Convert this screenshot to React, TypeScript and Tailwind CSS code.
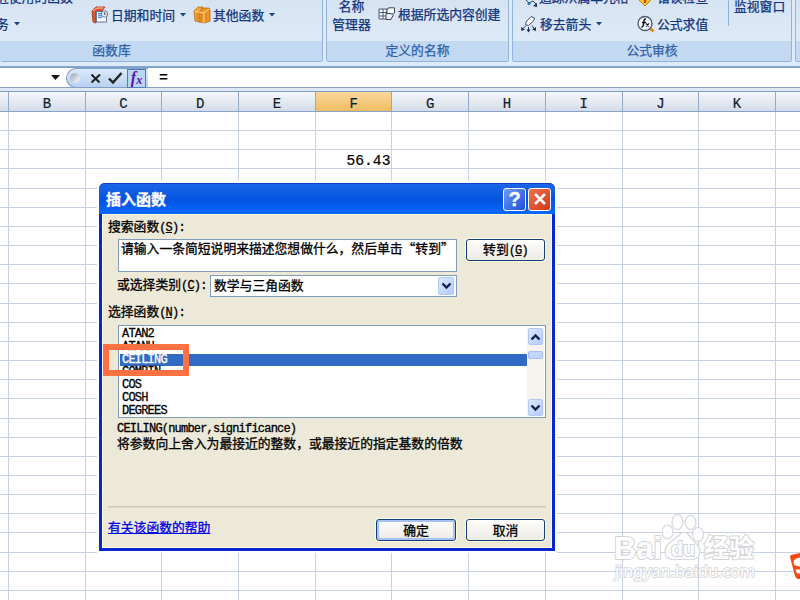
import React from "react";

const columns = ["B", "C", "D", "E", "F", "G", "H", "I", "J", "K", ""];
const rows = Array.from({ length: 26 }, (_, i) => i);
const functions = ["ATAN2", "ATANH", "CEILING", "COMBIN", "COS", "COSH", "DEGREES"];

function Caret({ className = "" }: { className?: string }) {
  return (
    <svg className={className} width="6" height="4" viewBox="0 0 6 4">
      <path d="M0 0h6L3 3.5z" fill="#1c3f86" />
    </svg>
  );
}

function CalendarBook() {
  return (
    <svg width="18" height="18" viewBox="0 0 18 18">
      <path d="M1 5 5 1h9l-3 4H5v12l-3-1z" fill="#e2552c" stroke="#a83414" strokeWidth=".8" />
      <path d="M2 5l4-3h6" stroke="#ffc4a8" fill="none" />
      <rect x="5.500" y="5.500" width="10" height="10.500" fill="#fff" stroke="#6a7690" />
      <path d="M7 7.500h6M7 9.500h5M7 11.500h4" stroke="#5f94dc" strokeWidth="1.300" />
      <circle cx="13.500" cy="8" r="3.200" fill="#dde6f3" stroke="#70809e" />
      <path d="M13.500 6.300v1.900h1.600" stroke="#334" strokeWidth=".8" fill="none" />
    </svg>
  );
}

function Books() {
  return (
    <svg width="18" height="18" viewBox="0 0 18 18">
      <path d="M1 5 5 1h5L7 5v11l-5-1z" fill="#f5a93c" stroke="#b76b12" strokeWidth=".8" />
      <path d="M6 6l4-4h6l1 2v11l-5 2-6-1z" fill="#ee9427" stroke="#b76b12" strokeWidth=".8" />
      <path d="M6 6l5 1 5-4M11 7v10M2 5.500l4 .5" stroke="#ffd58b" fill="none" />
      <path d="M13 7v8M8 8v7M4 7v7" stroke="#c97717" strokeWidth=".8" />
    </svg>
  );
}

function CreateNames() {
  return (
    <svg width="18" height="14" viewBox="0 0 18 14">
      <path d="M1 2h8v10H1zM1 5.500h8M1 9h8M5 2v10" fill="#f5f9ff" stroke="#4c5975" />
      <path d="M9 2l2-1.200h5.500V6L15 7H9z" fill="#fff" stroke="#36435e" />
      <path d="M8 6.500h5l2 2-2 4H8z" fill="#e6edf8" stroke="#36435e" />
    </svg>
  );
}

function EraseArrows() {
  return (
    <svg width="15" height="18" viewBox="0 0 15 18">
      <path d="M5 7 10 1.500l3.500 1.500-1 3-5 4.500-3-1z" fill="#fff" stroke="#3c527c" />
      <path d="M5 10.500l-3 3M7.500 12v3M11 10.500l2 3" stroke="#24395f" />
      <path d="M0 12l.5 4 3.500-1.500zM5.500 14.500h4l-2 3zM11 14.500l4 1.500v-4z" fill="#182c51" />
    </svg>
  );
}

function TraceArrows() {
  return (
    <svg width="12" height="8" viewBox="0 0 12 8">
      <path d="M1 0l3 3 4-2 3 3" stroke="#2e466f" fill="none" />
      <circle cx="4" cy="3.500" r="1.500" fill="#2868bd" />
      <path d="M8 6l4 1V3z" fill="#182c51" />
    </svg>
  );
}

function Evaluate() {
  return (
    <svg width="18" height="18" viewBox="0 0 18 18">
      <path d="M13 13l3.500 3.500" stroke="#e5851a" strokeWidth="3" />
      <circle cx="8" cy="8.500" r="7" fill="#f7fbff" stroke="#4e5d76" strokeWidth="1.400" />
      <path d="M9 4.200c-2-.7-2 2-2.300 4S6 12.500 4.300 12M5 7.500h4" fill="none" stroke="#101828" strokeWidth="1.500" />
      <path d="M9 8.500l3 3M12 8.500l-3 3" stroke="#101828" strokeWidth="1.200" />
    </svg>
  );
}

function Group({ label, className, labelClass = "", children }: { label: string; className: string; labelClass?: string; children?: React.ReactNode }) {
  return (
    <div className={`flex h-[62px] shrink-0 flex-col overflow-hidden rounded-b-[3px] border-x border-b border-[#93b3db] bg-[#dae7f5] ${className}`}>
      <div className="flex h-[41px] overflow-hidden bg-gradient-to-b from-[#d5e3f2] to-[#dfeaf7]">{children}</div>
      <div className={`h-[20px] bg-[#c3d9f2] text-center leading-[18px] text-[#2f5fa6] ${labelClass}`}>{label}</div>
    </div>
  );
}

function Ribbon() {
  return (
    <div className="flex h-[66px] gap-[3px] overflow-hidden bg-[#dceafa] text-[12.8px] leading-4 text-[#10337c] [-webkit-text-stroke:0.25px]">
      <Group label="函数库" className="w-[323px] border-l-0" labelClass="pr-[99px]">
        <div className="flex w-[91px] shrink-0 flex-col">
          <span className="-mt-[11px] -ml-[4px]">近使用的函数</span>
          <span className="mt-[11px] -ml-[4px] flex items-center">务<Caret className="ml-[5px]" /></span>
        </div>
        <div className="flex h-[17px] items-center pt-[13px]">
          <CalendarBook />
          <span className="ml-[2px]">日期和时间</span>
          <Caret className="ml-[5px]" />
          <span className="ml-[7px] h-[18px]"><Books /></span>
          <span className="ml-[2px]">其他函数</span>
          <Caret className="ml-[5px]" />
        </div>
      </Group>
      <Group label="定义的名称" className="w-[183px]">
        <div className="w-[49px] shrink-0 text-center">
          <div className="-mt-[2px]">名称</div>
          <div className="mt-[2px]">管理器</div>
        </div>
        <div className="ml-[2px] mt-[5px] flex h-[18px] items-center">
          <CreateNames />
          <span className="ml-[2px]">根据所选内容创建</span>
        </div>
      </Group>
      <Group label="公式审核" className="w-[280px]">
        <div className="ml-[8px] w-[117px] shrink-0">
          <div className="-mt-[11px] flex h-4"><span className="ml-[4px] mt-[11px]"><TraceArrows /></span><span className="ml-[2px]">追踪从属单元格</span></div>
          <div className="mt-[10px] flex h-[18px] items-center"><EraseArrows /><span className="ml-[4px]">移去箭头</span><Caret className="ml-[5px]" /></div>
        </div>
        <div className="w-[90px] shrink-0 -ml-px mr-px">
          <div className="-mt-[10px] flex h-4">
            <svg width="16" height="17" viewBox="0 0 16 17">
              <path d="M8 1l7.500 7.500L8 16 .5 8.500z" fill="#ffd229" stroke="#c57d0c" />
              <path d="M8 3v10" stroke="#d63a10" strokeWidth="2.500" />
            </svg>
            <span className="ml-[4px] -mt-px">错误检查</span>
          </div>
          <div className="mt-[9px] flex h-[18px] items-center"><Evaluate /><span className="ml-[2px]">公式求值</span></div>
        </div>
        <div className="h-[26px] w-px shrink-0 bg-[#8fb0dc]" />
        <div className="-mt-[2px] ml-[5px]">监视窗口</div>
      </Group>
      <Group label="" className="w-[20px]" />
    </div>
  );
}

function FormulaBar() {
  return (
    <div className="flex h-[26px] flex-col border-t-2 border-[#83a3cc] bg-[#dfe9f6]">
      <div className="flex h-[20px] border-b border-[#86a0c2] bg-white">
        <div className="flex w-[66px] items-center justify-end pr-[6px]">
          <svg width="9" height="5" viewBox="0 0 9 5"><path d="M0 0h9L4.500 5z" fill="#111" /></svg>
        </div>
        <div className="flex h-[20px] w-[82px] shrink-0 items-center rounded-l-full border border-r-0 border-[#7f9fcb] bg-gradient-to-b from-[#dce9fa] to-[#b8d0ef]">
          <span className="ml-[3px] h-[10px] w-[10px] rounded-full bg-gradient-to-br from-[#98a3b6] to-white" />
          <svg className="ml-[10px]" width="12" height="11" viewBox="0 0 12 11"><path d="M1.500 1.500l8 8M10 1.500l-8.500 8" stroke="#222" strokeWidth="2" /></svg>
          <svg className="ml-[6px]" width="15" height="12" viewBox="0 0 15 12"><path d="M1 6.500l4 4L13.500 1" stroke="#222" strokeWidth="2.400" fill="none" /></svg>
          <span className="ml-[4px] flex h-[19px] w-[19px] items-center justify-center border border-[#4f7db8] bg-[#bcd4f2] font-['Liberation_Serif',serif] text-[16px] font-bold italic leading-none text-[#5a12b4]">f<span className="mt-[4px] text-[12px]">x</span></span>
        </div>
        <span className="ml-[11px] font-['Liberation_Mono',monospace] text-[15px] font-bold leading-[22px] text-black">=</span>
      </div>
      <div className="mt-[3px] h-px bg-[#7f9cc4]" />
    </div>
  );
}

function Sheet() {
  return (
    <div className="w-[860px] font-['Liberation_Mono',monospace] [-webkit-text-stroke:0.2px]">
      <div className="flex h-[20px] border-b border-[#86a4c8] bg-gradient-to-b from-[#f5f7fb] to-[#d5dce8] text-center text-[14px] leading-[24px] text-[#101c28]">
        <div className="w-[9px] shrink-0 border-r border-[#91aaca]" />
        {columns.map((c, i) => (
          <div key={i} className={`h-[19px] w-[76.7px] shrink-0 border-r ${c === "F" ? "border-[#ee962f] bg-gradient-to-b from-[#f8d79c] to-[#f0bd61] shadow-[-1px_0_0_#ee962f]" : "border-[#91aaca]"}`}>{c}</div>
        ))}
      </div>
      {rows.map((r) => (
        <div key={r} className="flex h-[19.17px] border-b border-[#c6d1e5]">
          <div className="w-[9px] shrink-0 border-r border-[#c6d1e5]" />
          {columns.map((c, i) => (
            <div key={i} className="w-[76.7px] shrink-0 border-r border-[#c6d1e5] pr-px text-right text-[14.67px] leading-[22px] text-black">{r === 2 && c === "F" ? "56.43" : ""}</div>
          ))}
        </div>
      ))}
    </div>
  );
}

function L({ children }: { children: React.ReactNode }) {
  return <span className="font-['Liberation_Mono',monospace] text-[12px] tracking-[-0.8px]">{children}</span>;
}

function Key({ k, end = "):" }: { k: string; end?: string }) {
  return <L>(<u>{k}</u>{end}</L>;
}

function XpButton({ className, focused = false, children }: { className: string; focused?: boolean; children: React.ReactNode }) {
  return (
    <div className={`flex h-[22px] shrink-0 items-center justify-center rounded-[3px] border-[1.500px] border-[#123f78] bg-gradient-to-b from-white to-[#eceae2] ${focused ? "shadow-[0_0_0_1px_#fffbe0,inset_0_0_0_2px_#a6c2f3]" : "shadow-[0_0_0_1px_#fffbe0]"} ${className}`}>
      {children}
    </div>
  );
}

function ScrollArrow({ up = false, className }: { up?: boolean; className: string }) {
  return (
    <span className={`flex items-center justify-center rounded-[2px] border border-[#b4c8f4] bg-gradient-to-br from-[#dce8ff] to-[#b3cbfb] ${className}`}>
      <svg width="11" height="8" viewBox="0 0 11 8"><path d={up ? "M1.500 6.500L5.500 2.500 9.500 6.500" : "M1.500 1.500L5.500 5.500 9.500 1.500"} stroke="#12204c" strokeWidth="2.400" fill="none" /></svg>
    </span>
  );
}

function Dialog() {
  return (
    <div className="absolute left-[99px] top-[183px] flex h-[368px] w-[456px] flex-col rounded-t-[6px] bg-[#0628cc] text-[12.8px] leading-4 text-black shadow-[0_0_0_2px_#ffffff] [-webkit-text-stroke:0.3px]">
      <div className="flex h-[31px] shrink-0 items-center rounded-t-[6px] border-t border-[#0a3fc8] bg-gradient-to-b from-[#1c66e8] via-[#0553e0] to-[#0668fb] pr-[4px] pl-[7px]">
        <span className="text-[15px] font-bold text-white">插入函数</span>
        <span className="ml-auto flex h-[23px] w-[23px] items-center justify-center rounded-[3px] border-[1.500px] border-white bg-gradient-to-br from-[#6d9bf4] to-[#1c4ed8] font-['Liberation_Sans',sans-serif] text-[20px] font-bold leading-none text-white">?</span>
        <span className="ml-[2px] flex h-[23px] w-[23px] items-center justify-center rounded-[3px] border-[1.500px] border-white bg-gradient-to-br from-[#f0704c] to-[#d23710]">
          <svg width="14" height="14" viewBox="0 0 14 14"><path d="M2 2l10 10M12 2L2 12" stroke="#fff" strokeWidth="2.500" /></svg>
        </span>
      </div>
      <div className="mx-[3px] mb-[3px] flex min-h-0 flex-1 flex-col border border-[#fffbd8] bg-[#ece9d8] pr-[5px] pl-[5px]">
        <div className="mt-[3px] h-[16px]">搜索函数<Key k="S" /></div>
        <div className="mt-[5px] ml-[10px] flex items-start">
          <div className="h-[33px] w-[339px] shrink-0 whitespace-nowrap border border-[#7f9db9] bg-white pl-[2px] leading-[16px]">请输入一条简短说明来描述您想做什么，然后单击“转到”</div>
          <XpButton className="ml-[9px] w-[79px]"><span>转到<Key k="G" end=")" /></span></XpButton>
        </div>
        <div className="mt-[3px] ml-[10px] flex h-[22px] items-center">
          <span className="-mt-[2px] -ml-px w-[93px] shrink-0 whitespace-nowrap">或选择类别<Key k="C" /></span>
          <div className="flex h-[22px] w-[247px] items-center justify-between border border-[#7f9db9] bg-white pl-[3px] pr-[2px]">
            <span className="-mt-[2px]">数学与三角函数</span>
            <ScrollArrow className="h-[18px] w-[16px]" />
          </div>
        </div>
        <div className="mt-[6px] h-[16px]">选择函数<Key k="N" /></div>
        <div className="mt-[6px] ml-[10px] flex h-[93px] w-[428px] shrink-0 border border-[#7f9db9] bg-white pt-[2px]">
          <div className="w-[408px] pl-px font-['Liberation_Mono',monospace] text-[12px] tracking-[-0.8px]">
            {functions.map((f) => (
              <div key={f} className={`h-[12.75px] pl-[2px] leading-[12px] ${f === "CEILING" ? "bg-[#316ac5] text-white" : ""}`}>{f}</div>
            ))}
          </div>
          <div className="mb-px flex w-[17px] flex-col items-center bg-[#f5f3ed]">
            <ScrollArrow up className="h-[17px] w-[15px] shrink-0" />
            <span className="mt-[6px] h-[8px] w-[15px] rounded-[2px] border border-[#a5bdee] bg-[#c4d6fc]" />
            <ScrollArrow className="mt-auto h-[17px] w-[15px] shrink-0" />
          </div>
        </div>
        <div className="mt-[3px] ml-[9px] h-[15px] font-['Liberation_Mono',monospace] text-[12px] leading-[16px] tracking-[-0.8px]">CEILING(number,significance)</div>
        <div className="-mt-px mb-px ml-[9px] h-[16px]">将参数向上舍入为最接近的整数，或最接近的指定基数的倍数</div>
        <div className="mt-[54px] h-[2px] border-t border-b border-t-[#c9c7b6] border-b-[#dedbc9]" />
        <div className="mt-[11px] flex items-start">
          <span className="text-[#0000e8] underline">有关该函数的帮助</span>
          <XpButton focused className="ml-auto w-[80px]">确定</XpButton>
          <XpButton className="ml-[10px] mr-px w-[79px]">取消</XpButton>
        </div>
      </div>
    </div>
  );
}

function Watermark() {
  return (
    <svg className="absolute left-[605px] top-[508px]" width="160" height="80" viewBox="0 0 160 80">
      <g fill="#ffffff" fillOpacity=".8" stroke="#d6d6d9" strokeWidth="1.200">
        <ellipse cx="62.500" cy="24" rx="5.500" ry="7" />
        <ellipse cx="72.500" cy="14" rx="5.500" ry="7.500" />
        <ellipse cx="85.500" cy="14.500" rx="5.500" ry="7" />
        <ellipse cx="93" cy="26.500" rx="5.500" ry="7" />
        <path d="M77 24.500c7-1 9 7 14 11 6 5 5 15-3 16-6 1-9-1-14 0-8 1-14-1-14-8 0-8 9-11 17-19z" />
      </g>
      <g fill="#ffffff" stroke="#d3d3d6" strokeWidth="2" paintOrder="stroke" fontFamily="Liberation Sans, Noto Sans CJK SC, sans-serif" fontWeight="bold">
        <text x="9" y="50.500" fontSize="32" textLength="48" lengthAdjust="spacingAndGlyphs">Bai</text>
        <text x="66" y="48" fontSize="20" textLength="24" lengthAdjust="spacingAndGlyphs">du</text>
        <text x="99" y="48.500" fontSize="25" textLength="50" fontFamily="Noto Sans CJK SC, sans-serif">经验</text>
        <text x="10" y="69" fontSize="15.500" textLength="140" lengthAdjust="spacingAndGlyphs" fontFamily="Noto Sans, sans-serif" fontWeight="normal" strokeWidth="1.600">jingyan.baidu.com</text>
      </g>
    </svg>
  );
}

export default function App() {
  return (
    <div lang="zh-CN" className="relative h-[600px] w-[800px] overflow-hidden whitespace-nowrap bg-white font-['Noto_Sans_CJK_SC',sans-serif]">
      <Ribbon />
      <FormulaBar />
      <Sheet />
      <Watermark />
      <Dialog />
      <div className="absolute left-[103px] top-[344px] h-[32px] w-[86px] border-[6px] border-[#ff7141]" />
      <svg className="absolute left-[790px] top-[553px]" width="10" height="26" viewBox="0 0 10 26">
        <path d="M0 4Q0 2 3 1.500L10 0v26H8Q6 26 5 23z" fill="#f14a16" />
        <path d="M10 4.500Q4 5 3.500 9T10 13.500zM10 16.500H5.500L7 20.500h3z" fill="#fff" />
      </svg>
    </div>
  );
}
